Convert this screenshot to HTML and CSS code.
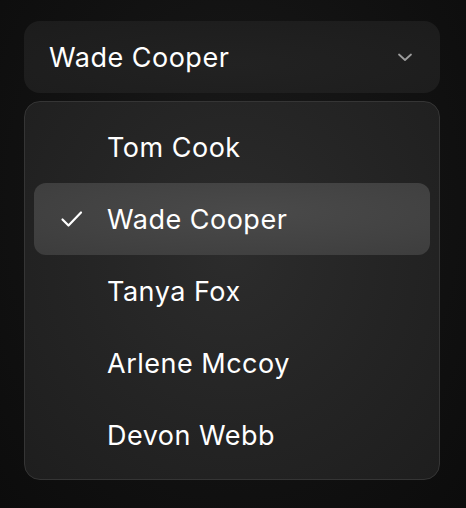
FILE: index.html
```html
<!DOCTYPE html>
<html>
<head>
<meta charset="utf-8">
<link rel="stylesheet" href="styles.css">
</head>
<body>
<div class="wrap">
  <button class="select">
    <span class="select-label">Wade Cooper</span>
    <svg class="chev" width="16" height="16" viewBox="0 0 16 16"><path d="M2 5.5 L8 11 L14 5.5" fill="none" stroke="currentColor" stroke-width="1.8" stroke-linecap="round" stroke-linejoin="round"/></svg>
  </button>
  <ul class="menu">
    <li class="item"><span class="check"></span><span>Tom Cook</span></li>
    <li class="item active"><span class="check"><svg width="24" height="24" viewBox="0 0 24 24"><path d="M2.5 12.5 L8.5 18.5 L21 5.5" fill="none" stroke="currentColor" stroke-width="2.2" stroke-linecap="round" stroke-linejoin="round"/></svg></span><span>Wade Cooper</span></li>
    <li class="item"><span class="check"></span><span>Tanya Fox</span></li>
    <li class="item"><span class="check"></span><span>Arlene Mccoy</span></li>
    <li class="item"><span class="check"></span><span>Devon Webb</span></li>
  </ul>
</div>
</body>
</html>
```
FILE: styles.css
```css
* { box-sizing: border-box; }
html, body { margin: 0; padding: 0; }
body {
  width: 466px;
  height: 508px;
  overflow: hidden;
  background: radial-gradient(ellipse at 50% 40%, #1a1a1a 0%, #111 60%, #0c0c0c 100%);
  font-family: Inter, "Noto Sans", sans-serif;
  color: #fff;
}
.wrap {
  padding: 21px 26px 0 24px;
  display: flex;
  flex-direction: column;
  gap: 8px;
}
.select {
  height: 72px;
  width: 416px;
  border: none;
  border-radius: 16px;
  background: radial-gradient(ellipse at 50% 60%, #222 0%, #1c1c1c 100%);
  display: flex;
  align-items: center;
  justify-content: space-between;
  padding: 0 27px 0 25px;
  color: #fff;
  font-family: inherit;
  font-size: 27px;
  letter-spacing: 0.5px;
}
.chev { color: #9c9c9c; }
.menu {
  list-style: none;
  margin: 0;
  width: 416px;
  height: 379px;
  border: 1px solid #353535;
  border-radius: 16px;
  padding: 9px 9px;
  background: radial-gradient(ellipse at 50% 40%, #2c2c2c 0%, #242424 55%, #1e1e1e 100%);
}
.item {
  height: 72px;
  display: flex;
  align-items: center;
  border-radius: 12px;
  font-size: 27px;
  letter-spacing: 0.5px;
  padding-left: 26px;
}
.item.active {
  background: radial-gradient(ellipse at 55% 40%, #4a4a4a 0%, #424242 60%, #3c3c3c 100%);
}
.check {
  width: 47px;
  display: flex;
  align-items: center;
}
.check svg { display: block; }
```
